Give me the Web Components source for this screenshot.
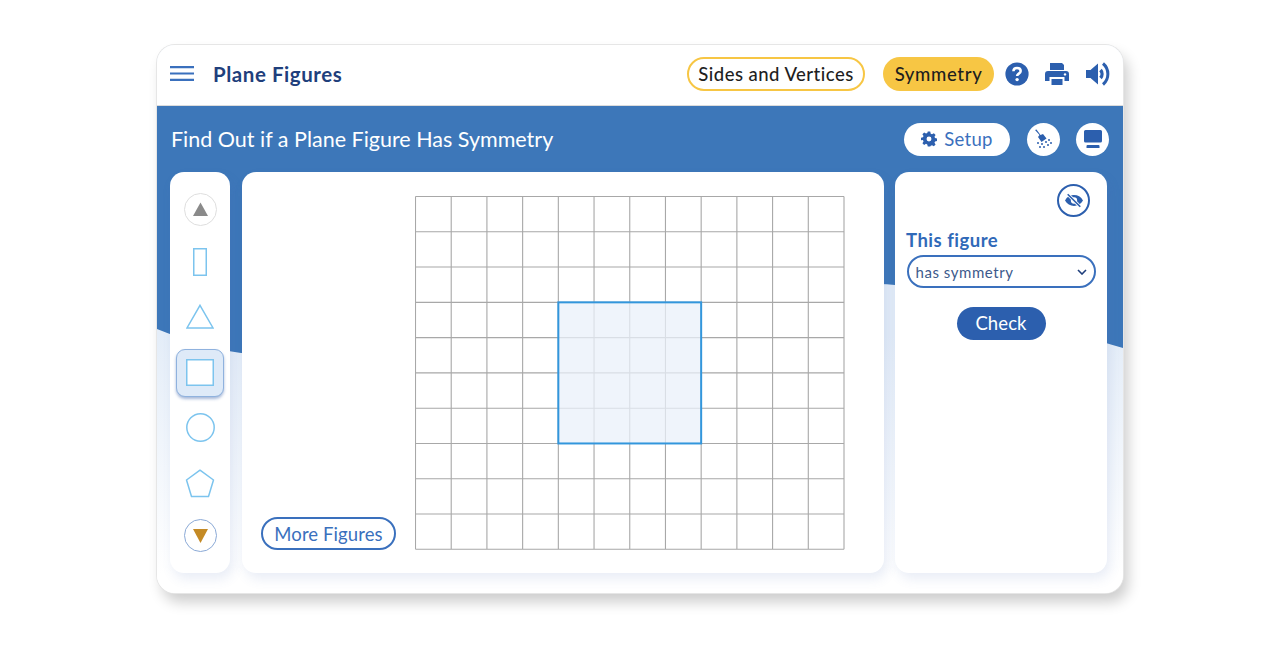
<!DOCTYPE html>
<html lang="en"><head><meta charset="utf-8"><title>Plane Figures</title>
<style>
html,body{margin:0;background:#fff;}
body{width:1280px;height:652px;overflow:hidden;font-family:"Lato","Open Sans",sans-serif;}
</style></head><body>
<app-shell>
  <top-bar title-text="Plane Figures"></top-bar>
  <sub-bar title-text="Find Out if a Plane Figure Has Symmetry"></sub-bar>
  <work-area>
    <shape-rail slot="rail"></shape-rail>
    <grid-canvas slot="canvas"></grid-canvas>
    <answer-panel slot="panel"></answer-panel>
  </work-area>
</app-shell>
<script>
function def(name, css, html){
  customElements.define(name, class extends HTMLElement{
    constructor(){super();const r=this.attachShadow({mode:'open'});r.innerHTML='<style>'+css+'</style>'+html(this);}
  });
}
const BLUE='#2c5fae';
def('app-shell',`
  :host{display:block;position:relative;box-sizing:border-box;width:966px;height:548px;margin:45px 0 0 157px;border-radius:18px;overflow:visible;
    box-shadow:0 0 0 1px #e6e6e6,5px 9px 14px rgba(0,0,0,.2);background:#fff}
  .bg{position:absolute;inset:0;border-radius:18px;overflow:hidden;background:linear-gradient(#e4edf8 290px,#fff 530px)}
  svg{position:absolute;left:0;top:61px;display:block}
  .fg{position:relative;display:flex;flex-direction:column;height:100%}
`,()=>`<div class="bg"><svg width="966" height="260" viewBox="0 0 966 260"><path fill="#3d77b9" d="M0 0H966V242C890 220 800 186 738 179C600 165 300 250 84 247C55 243 25 233 0 223Z"/></svg></div><div class="fg"><slot></slot></div>`);

def('pill-btn',`
  :host{display:inline-flex;align-items:center;justify-content:center;box-sizing:border-box;height:34px;border-radius:17px;font-size:18.5px;font-weight:500;color:#1e1e1e;white-space:nowrap}
  :host([kind=outline]){width:178px;border:2px solid #f7c644;background:#fff;letter-spacing:.47px}
  :host([kind=fill]){width:111px;background:#f7c644;margin-left:18px;letter-spacing:.65px}
`,()=>`<slot></slot>`);

def('top-bar',`
  :host{display:flex;align-items:center;box-sizing:border-box;height:61px;padding:0 13px 3px 13px;background:#fff;border-bottom:1px solid #dcdcdc;border-radius:18px 18px 0 0}
  .menu{width:24px;height:15px;display:block}
  h1{margin:0 0 0 19px;font-size:20.5px;font-weight:700;color:#1f3f7c;letter-spacing:.55px;flex:1}
  .ic{display:block;margin-left:11px}
`,(h)=>`
  <svg class="menu" viewBox="0 0 24 15"><path d="M0 1.2H24M0 7.5H24M0 13.8H24" stroke="#3a70bd" stroke-width="2.2"/></svg>
  <h1>${h.getAttribute('title-text')}</h1>
  <pill-btn kind="outline">Sides and Vertices</pill-btn>
  <pill-btn kind="fill">Symmetry</pill-btn>
  <svg class="ic" width="24" height="24" viewBox="0 0 24 24"><circle cx="12" cy="12" r="11.6" fill="${BLUE}"/><path d="M8.4 9.2C8.5 7 10 6 12 6c2.2 0 3.7 1.2 3.700 3 0 2.600-3.600 2.600-3.600 5" fill="none" stroke="#fff" stroke-width="2.500"/><circle cx="12.100" cy="17.600" r="1.700" fill="#fff"/></svg>
  <svg class="ic" style="margin-left:16px" width="24" height="24" viewBox="0 0 24 24"><path fill="${BLUE}" d="M5 1h12l2 2v5H5zM3 9h18a3 3 0 0 1 3 3v7h-4.500v-4h-15v4H0v-7a3 3 0 0 1 3-3zM6.500 17h11v6h-11z"/><circle cx="20" cy="12.400" r="1.200" fill="#fff"/></svg>
  <svg class="ic" style="margin-left:17px" width="24" height="24" viewBox="0 0 24 24"><path fill="${BLUE}" d="M0 8h4.500L12 1.500V22.500L4.500 16H0z"/><path fill="none" stroke="${BLUE}" stroke-width="3.400" d="M14.500 8c2 2.200 2 5.800 0 8"/><path fill="none" stroke="${BLUE}" stroke-width="3" d="M17 1.500c6.500 5.500 6.500 15.500 0 21"/></svg>
`);

def('round-btn',`
  :host{display:flex;align-items:center;justify-content:center;width:33px;height:33px;border-radius:50%;background:#fff;margin-left:16.5px}
`,()=>`<slot></slot>`);

def('sub-bar',`
  :host{display:flex;align-items:center;box-sizing:border-box;height:66px;padding:0 14px 0 14px}
  h2{margin:0;flex:1;font-size:21.5px;font-weight:400;color:#fff;letter-spacing:0}
  .setup{display:flex;align-items:center;justify-content:center;gap:7px;width:106px;height:33px;border-radius:16.5px;background:#fff;color:#3a70bd;font-size:18.500px;letter-spacing:.3px}
`,(h)=>`
  <h2>${h.getAttribute('title-text')}</h2>
  <div class="setup"><svg width="16" height="16" viewBox="-1 0 26 24"><path fill="${BLUE}" fill-rule="evenodd" d="M10 0h4l.8 3.400 2.100.9 3-1.800 2.800 2.800-1.800 3 .9 2.100 3.200.8v4l-3.200.8-.9 2.100 1.800 3-2.800 2.800-3-1.800-2.100.9L14 24h-4l-.8-3.200-2.100-.9-3 1.800-2.800-2.800 1.800-3-.9-2.100L-1 14v-4l3.200-.8.9-2.100-1.800-3 2.800-2.800 3 1.800 2.100-.9zM12 8a4 4 0 1 0 0 8 4 4 0 0 0 0-8z"/></svg><span>Setup</span></div>
  <round-btn><svg width="20" height="20" viewBox="0 0 20 20"><path fill="${BLUE}" d="M2 1l1.500-.5 4 5.500 2.500-1 3.500 4.500-5 3.500-3.500-5 1.500-2z"/><g fill="${BLUE}"><circle cx="5" cy="14" r="1"/><circle cx="9" cy="15" r="1"/><circle cx="13" cy="13" r="1"/><circle cx="16" cy="11" r="1"/><circle cx="7" cy="18" r="1"/><circle cx="11" cy="18" r="1"/><circle cx="15" cy="16" r="1"/><circle cx="18" cy="14" r="1"/></g></svg></round-btn>
  <round-btn><svg width="18" height="19" viewBox="0 0 18 19"><path fill="${BLUE}" d="M1.500 0h15A1.500 1.500 0 0 1 18 1.500V11a1.500 1.500 0 0 1-1.500 1.500h-15A1.500 1.500 0 0 1 0 11V1.500A1.500 1.500 0 0 1 1.500 0zM3.500 15h11a1 1 0 0 1 1 1v2h-13v-2a1 1 0 0 1 1-1z"/></svg></round-btn>
`);

def('work-area',`
  :host{display:flex;flex:1;padding:0 16px 20px 13px;min-height:0}
  ::slotted([slot=canvas]){margin-left:12px}
  ::slotted([slot=panel]){margin-left:11px}
`,()=>`<slot name="rail"></slot><slot name="canvas"></slot><slot name="panel"></slot>`);

def('shape-tool',`
  :host{display:flex;align-items:center;justify-content:center;box-sizing:border-box;width:48px;height:48px;border-radius:9px;border:1.500px solid transparent}
  :host([active]){background:#deeaf8;border-color:#8fb2de;box-shadow:0 2px 3px rgba(60,100,170,.45)}
`,()=>`<slot></slot>`);

def('shape-rail',`
  :host{display:flex;flex-direction:column;align-items:center;box-sizing:border-box;width:60px;height:401px;padding-top:21px;border-radius:14px;background:#fff;box-shadow:3px 6px 12px rgba(70,110,180,.12)}
  svg{display:block}
`,()=>{
  const s='#7cc4ee';
  return `
  <svg width="33" height="33" viewBox="0 0 33 33"><circle cx="16.500" cy="16.500" r="16" fill="#fff" stroke="#dedede"/><path d="M16.500 9.500L24 23H9z" fill="#8a8a8a"/></svg>
  <shape-tool style="margin-top:11.500px"><svg width="14" height="28" viewBox="0 0 14 28"><rect x=".75" y=".75" width="12.500" height="26.500" fill="none" stroke="${s}" stroke-width="1.500"/></svg></shape-tool>
  <shape-tool style="margin-top:6.500px"><svg width="28" height="25" viewBox="0 0 28 25"><path d="M14 1.300L27 24H1z" fill="none" stroke="${s}" stroke-width="1.500"/></svg></shape-tool>
  <shape-tool active style="margin-top:8.500px"><svg width="28" height="27" viewBox="0 0 28 27"><rect x=".75" y=".75" width="26.500" height="25.500" fill="#fff" stroke="${s}" stroke-width="1.500"/></svg></shape-tool>
  <shape-tool style="margin-top:7px"><svg width="29" height="29" viewBox="0 0 29 29"><circle cx="14.500" cy="14.500" r="13.700" fill="none" stroke="${s}" stroke-width="1.500"/></svg></shape-tool>
  <shape-tool style="margin-top:8px"><svg width="30" height="29" viewBox="0 0 30 29"><path d="M15 1.200L28.500 11 23.500 27.500H6.500L1.500 11z" fill="none" stroke="${s}" stroke-width="1.500" stroke-linejoin="round"/></svg></shape-tool>
  <svg style="margin-top:11px" width="33" height="33" viewBox="0 0 33 33"><circle cx="16.500" cy="16.500" r="16" fill="#fff" stroke="#8aa9d6"/><path d="M9 10H24L16.500 24z" fill="#c48a25"/></svg>`;
});

def('grid-board',`:host{display:block;width:430px;height:354px}svg{display:block}`,()=>{
  let d='';
  const cw=428.5/12, ch=352.8/10;
  for(let i=0;i<=12;i++){const x=(.5+i*cw).toFixed(2);d+=`M${x} .5V353.300`;}
  for(let j=0;j<=10;j++){const y=(.5+j*ch).toFixed(2);d+=`M.5 ${y}H429`;}
  const rx=(.5+4*cw).toFixed(2), ry=(.5+3*ch).toFixed(2), rw=(4*cw).toFixed(2), rh=(4*ch).toFixed(2);
  return `<svg width="430" height="354" viewBox="0 0 430 354">
    <path d="${d}" fill="none" stroke="#a8a8a8" stroke-width="1.100"/>
    <rect x="${rx}" y="${ry}" width="${rw}" height="${rh}" fill="#eaf0fa" fill-opacity=".75"/>
    <rect x="${rx}" y="${ry}" width="${rw}" height="${rh}" fill="none" stroke="#3296dc" stroke-width="2"/>
  </svg>`;
});

def('grid-canvas',`
  :host{display:flex;justify-content:space-between;box-sizing:border-box;width:642px;height:401px;padding:24px 39px 23px 19px;border-radius:14px;background:#fff;box-shadow:3px 6px 12px rgba(70,110,180,.12)}
  .more{align-self:flex-end;display:flex;align-items:center;justify-content:center;box-sizing:border-box;width:135px;height:33px;border:2px solid #3a70bd;border-radius:16.5px;color:#3a70bd;font-size:18.500px;letter-spacing:.1px;background:#fff}
`,()=>`<div class="more">More Figures</div><grid-board></grid-board>`);

def('answer-panel',`
  :host{display:flex;flex-direction:column;box-sizing:border-box;width:212px;height:401px;padding:12px 12px 0 11px;border-radius:14px;background:#fff;box-shadow:3px 6px 12px rgba(70,110,180,.12)}
  .eye{align-self:flex-end;box-sizing:border-box;width:33px;height:33px;margin-right:5px;border:2px solid ${BLUE};border-radius:50%;display:flex;align-items:center;justify-content:center}
  h3{margin:11px 0 0 0;font-size:18.500px;line-height:24px;font-weight:700;color:#3069b8;letter-spacing:.5px}
  .sel{display:flex;align-items:center;justify-content:space-between;box-sizing:border-box;width:188.500px;height:33px;margin:3px 0 0 1px;padding:0 7px 0 6.500px;border:2px solid #3a70bd;border-radius:16.5px;font-size:15px;color:#3d5a8c;letter-spacing:.55px}
  .check{align-self:center;display:flex;align-items:center;justify-content:center;width:89px;height:32.500px;margin:19px 0 0 1px;border-radius:16.5px;background:${BLUE};color:#fff;font-size:18.500px;letter-spacing:.1px}
`,()=>`
  <div class="eye"><svg width="18" height="15" viewBox="0 0 20 16"><path fill="${BLUE}" fill-rule="evenodd" d="M0 8C2 4 6 2 10 2s8 2 10 6c-2 4-6 6-10 6S2 12 0 8zm10-3.500a3.500 3.500 0 1 0 0 7 3.500 3.500 0 0 0 0-7z"/><path stroke="#fff" stroke-width="3.600" d="M3 1L17 15"/><path stroke="${BLUE}" stroke-width="1.800" d="M3 1L17 15"/></svg></div>
  <h3>This figure</h3>
  <div class="sel"><span>has symmetry</span><svg width="10" height="6" viewBox="0 0 10 6"><path d="M1 1l4 4 4-4" fill="none" stroke="#1f3f7c" stroke-width="1.600"/></svg></div>
  <div class="check">Check</div>
`);
</script>
</body></html>
